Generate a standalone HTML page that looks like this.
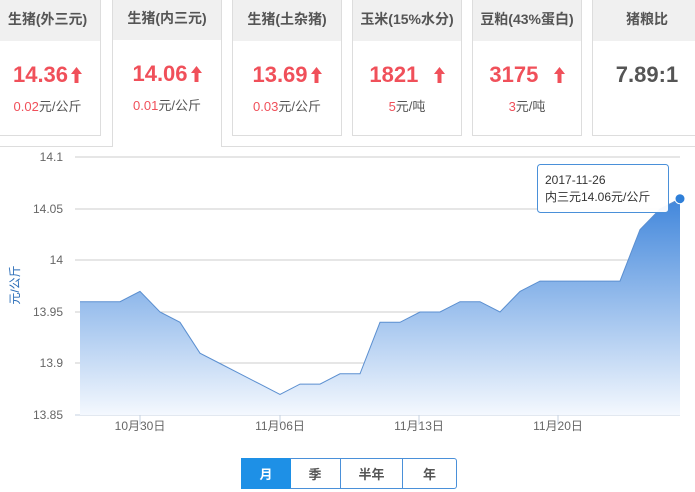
<!DOCTYPE html><html><head><meta charset="utf-8"><style>
body{margin:0;width:695px;height:492px;overflow:hidden;background:#fff;font-family:"Liberation Sans","Noto Sans CJK SC",sans-serif;position:relative}
.c{position:absolute;top:-2px;height:138px;border:1px solid #ddd;background:#fff;box-sizing:border-box}
.c .h{height:42px;background:#f0f0f0;text-align:center;line-height:40px;font-size:14px;font-weight:bold;color:#555}
.c .v{text-align:center;font-size:22px;font-weight:bold;color:#f0505a;margin-top:21px;height:26px;line-height:26px}
.c .s{text-align:center;font-size:13px;color:#555;margin-top:8px}
.c .s b{font-weight:normal;color:#f0505a}
.ar{display:inline-block;width:11px;height:16px;vertical-align:-1px;margin-left:3px}
.btn{position:absolute;top:458px;height:31px;line-height:31px;text-align:center;font-size:13px;font-weight:bold;color:#555;border:1px solid #4a90d9;box-sizing:border-box}
</style></head><body>
<div style="position:absolute;left:0;top:146px;width:112px;border-top:1px solid #ddd"></div>
<div style="position:absolute;left:221px;top:146px;width:474px;border-top:1px solid #ddd"></div>
<div style="position:absolute;left:112px;top:-2px;width:110px;height:149px;border:1px solid #ddd;border-bottom:none;box-sizing:border-box"></div>
<div class="c" style="left:-6px;width:107px"><div class="h">生猪(外三元)</div><div class="v">14.36<svg class="ar" viewBox="0 0 11 16"><path d="M5.5 0L11 7H7.5V16H3.5V7H0Z" fill="#f0505a"/></svg></div><div class="s"><b>0.02</b>元/公斤</div></div>
<div class="c" style="left:113px;width:108px;border:none;height:140px"><div class="h">生猪(内三元)</div><div class="v">14.06<svg class="ar" viewBox="0 0 11 16"><path d="M5.5 0L11 7H7.5V16H3.5V7H0Z" fill="#f0505a"/></svg></div><div class="s"><b>0.01</b>元/公斤</div></div>
<div class="c" style="left:232px;width:110px"><div class="h">生猪(土杂猪)</div><div class="v">13.69<svg class="ar" viewBox="0 0 11 16"><path d="M5.5 0L11 7H7.5V16H3.5V7H0Z" fill="#f0505a"/></svg></div><div class="s"><b>0.03</b>元/公斤</div></div>
<div class="c" style="left:352px;width:110px"><div class="h">玉米(15%水分)</div><div class="v">1821 &nbsp;<svg class="ar" viewBox="0 0 11 16"><path d="M5.5 0L11 7H7.5V16H3.5V7H0Z" fill="#f0505a"/></svg></div><div class="s"><b>5</b>元/吨</div></div>
<div class="c" style="left:472px;width:110px"><div class="h">豆粕(43%蛋白)</div><div class="v">3175 &nbsp;<svg class="ar" viewBox="0 0 11 16"><path d="M5.5 0L11 7H7.5V16H3.5V7H0Z" fill="#f0505a"/></svg></div><div class="s"><b>3</b>元/吨</div></div>
<div class="c" style="left:592px;width:110px"><div class="h">猪粮比</div><div class="v" style="color:#555">7.89:1</div></div>
<svg width="695" height="492" style="position:absolute;left:0;top:0" font-family="Liberation Sans" font-size="12" fill="#666">
<defs><linearGradient id="g" gradientUnits="userSpaceOnUse" x1="0" y1="190" x2="0" y2="415"><stop offset="0" stop-color="#3a82da"/><stop offset="1" stop-color="#f4f8fe"/></linearGradient></defs>
<g stroke="#ccc"><line x1="75" y1="157" x2="680" y2="157"/><line x1="75" y1="209" x2="680" y2="209"/><line x1="75" y1="260" x2="680" y2="260"/><line x1="75" y1="312" x2="680" y2="312"/><line x1="75" y1="363" x2="680" y2="363"/><line x1="75" y1="415" x2="680" y2="415" stroke="#c6d2e0"/></g>
<g text-anchor="end"><text x="63" y="161">14.1</text><text x="63" y="213">14.05</text><text x="63" y="264">14</text><text x="63" y="316">13.95</text><text x="63" y="367">13.9</text><text x="63" y="419">13.85</text></g>
<path d="M80,301.7 L100,301.7 L120,301.7 L140,291.4 L160,312 L180,322.3 L200,353.2 L220,363.5 L240,373.8 L260,384.1 L280,394.4 L300,384.1 L320,384.1 L340,373.8 L360,373.8 L380,322.3 L400,322.3 L420,312 L440,312 L460,301.7 L480,301.7 L500,312 L520,291.4 L540,281.1 L560,281.1 L580,281.1 L600,281.1 L620,281.1 L640,229.6 L660,209 L680,198.7 L680,415 L80,415Z" fill="url(#g)" stroke="none"/>
<path d="M80,301.7 L100,301.7 L120,301.7 L140,291.4 L160,312 L180,322.3 L200,353.2 L220,363.5 L240,373.8 L260,384.1 L280,394.4 L300,384.1 L320,384.1 L340,373.8 L360,373.8 L380,322.3 L400,322.3 L420,312 L440,312 L460,301.7 L480,301.7 L500,312 L520,291.4 L540,281.1 L560,281.1 L580,281.1 L600,281.1 L620,281.1 L640,229.6 L660,209 L680,198.7" fill="none" stroke="#5b8fd0" stroke-width="1"/>
<g stroke="#c6d2e0"><line x1="140" y1="415" x2="140" y2="425"/><line x1="280" y1="415" x2="280" y2="425"/><line x1="419" y1="415" x2="419" y2="425"/><line x1="558" y1="415" x2="558" y2="425"/></g>
<g text-anchor="middle"><text x="140" y="430">10月30日</text><text x="280" y="430">11月06日</text><text x="419" y="430">11月13日</text><text x="558" y="430">11月20日</text></g>
<text transform="translate(19,285) rotate(-90)" text-anchor="middle" fill="#2a6db8">元/公斤</text>
<circle cx="680" cy="198.7" r="5" fill="#2f7fd8" stroke="#fff" stroke-width="1"/>
<rect x="537.5" y="164.5" width="131" height="48" rx="3" fill="#fff" fill-opacity="0.95" stroke="#4a90d9"/>
<text x="545" y="184" fill="#333">2017-11-26</text><text x="545" y="201" fill="#333">内三元14.06元/公斤</text>
</svg>
<div class="btn" style="left:241px;width:50px;background:#1e90e6;color:#fff;border-color:#1e90e6">月</div>
<div class="btn" style="left:290px;width:51px;border-left:none">季</div>
<div class="btn" style="left:340px;width:63px">半年</div>
<div class="btn" style="left:402px;width:55px;border-radius:0 3px 3px 0">年</div>
</body></html>
